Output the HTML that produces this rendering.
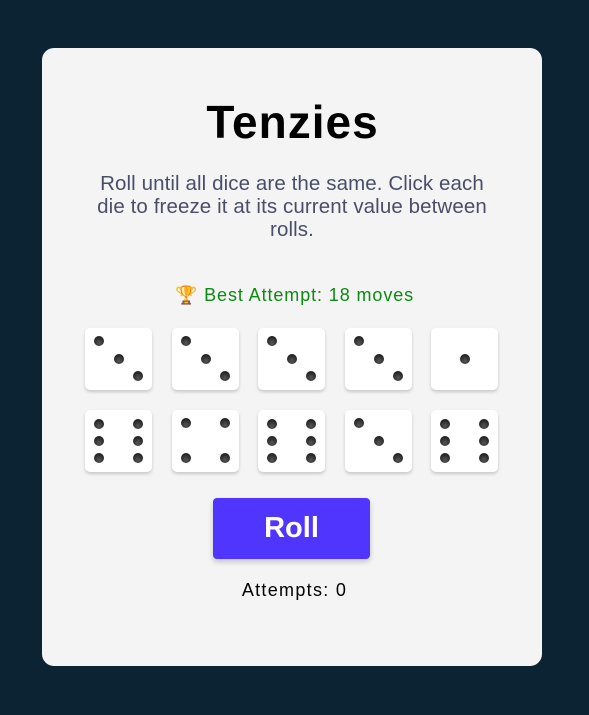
<!DOCTYPE html><html><head><style>
body{margin:0;width:589px;height:715px;background:#0b2333;font-family:"Liberation Sans",sans-serif;position:relative;overflow:hidden}
.card{position:absolute;left:42px;top:48px;width:500px;height:618px;background:#f4f4f4;border-radius:12px}
h1{position:absolute;left:0;right:0;top:95px;margin:0;text-align:center;font-size:46px;font-weight:bold;letter-spacing:1px;color:#000;text-indent:-4px}
p{position:absolute;left:42px;width:500px;top:172px;margin:0;text-align:center;font-size:20.5px;line-height:23px;color:#4a4e69;letter-spacing:0.1px}
.best{position:absolute;left:0;right:0;top:285px;text-align:center;color:#0d8a12;font-size:18px;letter-spacing:0.9px}
.d{position:absolute;width:67px;height:62px;background:#fff;border-radius:5px;box-shadow:0 2px 3px rgba(0,0,0,.18)}
.p{position:absolute;width:10px;height:10px;border-radius:50%;background:radial-gradient(circle at 50% 70%,#555 0,#2a2a2a 60%,#111 100%)}
.btn{position:absolute;left:213px;top:498px;width:157px;height:61px;background:#5035ff;border-radius:4px;box-shadow:0 3px 6px rgba(0,0,0,.2);color:#fff;font-weight:bold;font-size:29px;text-align:center;line-height:61px}
.att{position:absolute;left:0;right:0;top:580px;text-align:center;font-size:18px;letter-spacing:1.3px;color:#000}
</style></head><body>
<div class="card"></div>
<h1>Tenzies</h1>
<p>Roll until all dice are the same. Click each<br>die to freeze it at its current value between<br>rolls.</p>
<div class="best">🏆 Best Attempt: 18 moves</div>
<div id="dice"></div>
<div class="btn">Roll</div>
<div class="att">Attempts: 0</div>
<script>
var xs=[85,172,258,345,431],vals=[3,3,3,3,1,6,4,6,3,6];
var P={1:[[1,1]],3:[[0,0],[1,1],[2,2]],4:[[0,0],[2,0],[0,2],[2,2]],6:[[0,0],[2,0],[0,1],[2,1],[0,2],[2,2]]};
var h='';
for(var i=0;i<10;i++){var x=xs[i%5],y=i<5?328:410;h+='<div class="d" style="left:'+x+'px;top:'+y+'px">';
var v=vals[i];P[v].forEach(function(q){var px=[9,29,48][q[0]],py=v==6?[9,26,43][q[1]]:[8,26,43][q[1]];h+='<div class="p" style="left:'+px+'px;top:'+py+'px"></div>'});h+='</div>';}
document.getElementById('dice').innerHTML=h;
</script>
</body></html>
